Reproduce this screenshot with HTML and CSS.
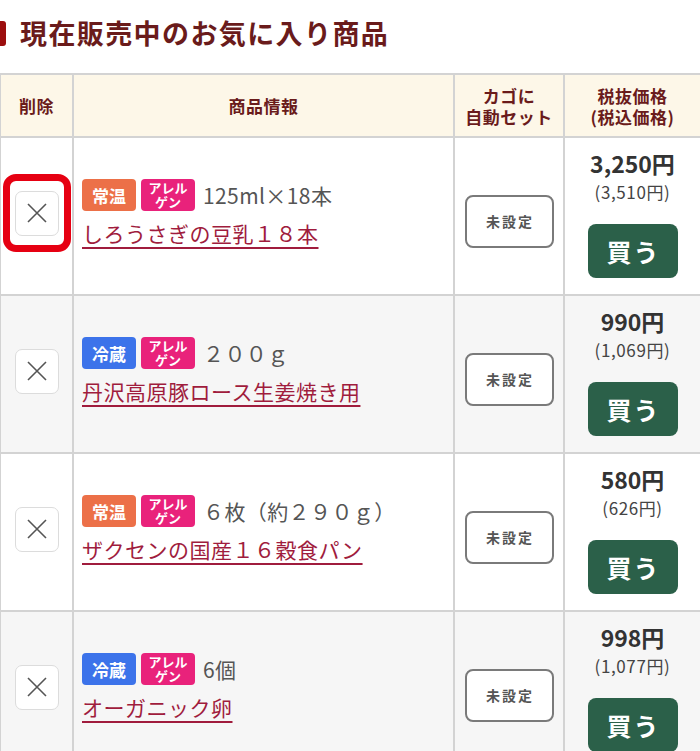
FILE: index.html
```html
<!DOCTYPE html>
<html lang="ja">
<head>
<meta charset="utf-8">
<title>現在販売中のお気に入り商品</title>
<link rel="stylesheet" href="styles.css">
</head>
<body>
<h2 class="title"><span class="title-bar"></span><span class="title-text">現在販売中のお気に入り商品</span></h2>

<div class="fav-table">
  <div class="row head">
    <div class="cell">削除</div>
    <div class="cell">商品情報</div>
    <div class="cell">カゴに<br>自動セット</div>
    <div class="cell">税抜価格<br>(税込価格)</div>
  </div>

  <div class="row">
    <div class="cell del"><span class="del-wrap highlight"><button class="del-btn" aria-label="削除"><svg viewBox="0 0 20 20" width="20" height="20"><path d="M1 1 L19 19 M19 1 L1 19" stroke="#555" stroke-width="1.6" fill="none"/></svg></button></span></div>
    <div class="cell info">
      <div class="tags"><span class="badge normal">常温</span><span class="badge allergen"><span>アレル</span><span>ゲン</span></span><span class="spec">125ml×18本</span></div>
      <a class="name" href="#">しろうさぎの豆乳１８本</a>
    </div>
    <div class="cell auto"><button class="auto-btn">未設定</button></div>
    <div class="cell price"><div class="p-main">3,250円</div><div class="p-sub">(3,510円)</div><button class="buy">買う</button></div>
  </div>

  <div class="row alt">
    <div class="cell del"><span class="del-wrap"><button class="del-btn" aria-label="削除"><svg viewBox="0 0 20 20" width="20" height="20"><path d="M1 1 L19 19 M19 1 L1 19" stroke="#555" stroke-width="1.6" fill="none"/></svg></button></span></div>
    <div class="cell info">
      <div class="tags"><span class="badge cold">冷蔵</span><span class="badge allergen"><span>アレル</span><span>ゲン</span></span><span class="spec">２００ｇ</span></div>
      <a class="name" href="#">丹沢高原豚ロース生姜焼き用</a>
    </div>
    <div class="cell auto"><button class="auto-btn">未設定</button></div>
    <div class="cell price"><div class="p-main">990円</div><div class="p-sub">(1,069円)</div><button class="buy">買う</button></div>
  </div>

  <div class="row">
    <div class="cell del"><span class="del-wrap"><button class="del-btn" aria-label="削除"><svg viewBox="0 0 20 20" width="20" height="20"><path d="M1 1 L19 19 M19 1 L1 19" stroke="#555" stroke-width="1.6" fill="none"/></svg></button></span></div>
    <div class="cell info">
      <div class="tags"><span class="badge normal">常温</span><span class="badge allergen"><span>アレル</span><span>ゲン</span></span><span class="spec">６枚（約２９０ｇ）</span></div>
      <a class="name" href="#">ザクセンの国産１６穀食パン</a>
    </div>
    <div class="cell auto"><button class="auto-btn">未設定</button></div>
    <div class="cell price"><div class="p-main">580円</div><div class="p-sub">(626円)</div><button class="buy">買う</button></div>
  </div>

  <div class="row alt">
    <div class="cell del"><span class="del-wrap"><button class="del-btn" aria-label="削除"><svg viewBox="0 0 20 20" width="20" height="20"><path d="M1 1 L19 19 M19 1 L1 19" stroke="#555" stroke-width="1.6" fill="none"/></svg></button></span></div>
    <div class="cell info">
      <div class="tags"><span class="badge cold">冷蔵</span><span class="badge allergen"><span>アレル</span><span>ゲン</span></span><span class="spec">6個</span></div>
      <a class="name" href="#">オーガニック卵</a>
    </div>
    <div class="cell auto"><button class="auto-btn">未設定</button></div>
    <div class="cell price"><div class="p-main">998円</div><div class="p-sub">(1,077円)</div><button class="buy">買う</button></div>
  </div>
</div>
</body>
</html>
```

FILE: styles.css
```css
* { box-sizing: border-box; }
html, body { margin: 0; padding: 0; background: #fff; }
body {
  font-family: "Noto Sans CJK JP", "Noto Sans", sans-serif;
  color: #333;
}
.title {
  display: flex;
  align-items: flex-start;
  gap: 14px;
  margin: 0;
  padding: 17px 0 0 0;
  height: 73px;
}
.title-bar {
  display: block;
  width: 6px;
  height: 25px;
  margin-top: 4px;
  background: #9c0e0e;
  border-radius: 0 3px 3px 0;
}
.title-text {
  font-size: 27px;
  line-height: 32px;
  font-weight: 700;
  color: #6a1b1b;
  letter-spacing: 1.4px;
}
.fav-table {
  display: flex;
  flex-direction: column;
  gap: 2px;
  background: #d3d3d3;
  padding: 2px 0 0 1px;
  width: 700px;
}
.row {
  display: grid;
  grid-template-columns: 71px 379px 108px 135px;
  gap: 2px;
}
.cell {
  background: #fff;
  display: flex;
  flex-direction: column;
  justify-content: center;
}
.row.alt .cell { background: #f6f6f6; }
.row.head .cell {
  background: #fdf7e8;
  height: 61px;
  align-items: center;
  text-align: center;
  font-size: 17px;
  line-height: 21px;
  font-weight: 700;
  color: #6a1b1b;
  letter-spacing: 0.5px;
}
.cell.del {
  align-items: center;
  padding-bottom: 6px;
}
.del-wrap { position: relative; display: block; }
.highlight::after {
  content: "";
  position: absolute;
  top: -17px; bottom: -16px; left: -12px; right: -12px;
  border: 7px solid #e60012;
  border-radius: 13px;
  pointer-events: none;
}
.del-btn {
  display: flex;
  align-items: center;
  justify-content: center;
  width: 44px;
  height: 45px;
  padding: 0;
  background: #fff;
  border: 1px solid #dcdcdc;
  border-radius: 7px;
}
.cell.info {
  padding: 0 0 6px 8px;
}
.tags {
  display: flex;
  align-items: center;
}
.badge {
  display: flex;
  flex-direction: column;
  align-items: center;
  justify-content: center;
  text-align: center;
  width: 54px;
  height: 32px;
  border-radius: 4px;
  color: #fff;
  font-weight: 700;
  font-size: 17px;
  margin-right: 5px;
}
.badge.normal { background: #ec7048; }
.badge.cold { background: #3c73ea; }
.badge.allergen {
  background: #e9227b;
  font-size: 13px;
  line-height: 14px;
  letter-spacing: 0;
  margin-right: 8px;
}
.badge.allergen span { display: block; }
.spec {
  font-size: 21px;
  color: #555;
  line-height: 28px;
  letter-spacing: 0.4px;
}
.name {
  margin-top: 8px;
  align-self: flex-start;
  font-size: 21px;
  line-height: 28px;
  color: #a01c3d;
  letter-spacing: 0.5px;
  text-decoration: underline;
  text-decoration-thickness: 2px;
  text-underline-offset: 5px;
}
.cell.auto {
  align-items: center;
  padding-top: 10px;
}
.auto-btn {
  width: 89px;
  height: 53px;
  background: #fff;
  border: 2px solid #7a7a7a;
  border-radius: 8px;
  font-family: inherit;
  font-size: 14px;
  font-weight: 700;
  color: #555;
  letter-spacing: 2px;
  padding: 0 0 0 2px;
}
.cell.price {
  align-items: center;
  justify-content: flex-start;
  padding: 12px 0 16px;
}
.p-main {
  font-size: 23px;
  line-height: 26px;
  font-weight: 700;
  color: #333;
}
.p-sub {
  margin-top: 4px;
  font-size: 17px;
  line-height: 24px;
  color: #444;
  letter-spacing: 0.6px;
}
.buy {
  margin-top: 20px;
  width: 90px;
  height: 54px;
  background: #2b6049;
  border: none;
  border-radius: 8px;
  color: #fff;
  font-family: inherit;
  font-size: 25px;
  font-weight: 700;
  letter-spacing: 2px;
  padding: 0 0 0 2px;
}
```
